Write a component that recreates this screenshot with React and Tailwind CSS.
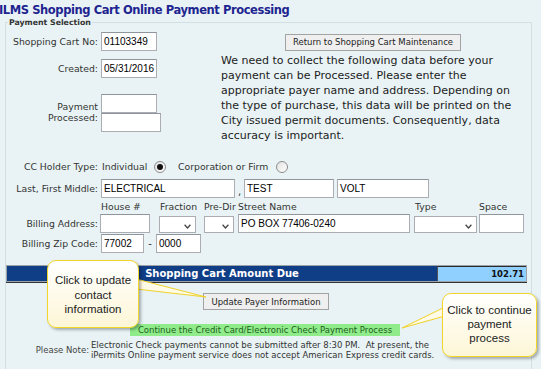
import React from "react";

const LABEL = "text-[9.3px] text-[#333] whitespace-nowrap";

function Input({ className = "", children }) {
  return (
    <div
      className={`h-[19px] shrink-0 bg-white border border-[#abadb3] border-t-[#8f959c] flex items-center pl-[2px] text-[10px] leading-none text-black font-['Liberation_Sans',sans-serif] ${className}`}
    >
      {children}
    </div>
  );
}

function Select({ className = "" }) {
  return (
    <div className={`h-[17px] shrink-0 bg-white border border-[#abadb3] flex items-end justify-end pr-[4px] pb-[3px] ${className}`}>
      <svg width="7" height="5" viewBox="0 0 7 5">
        <path d="M0.6 0.8 L3.5 4 L6.4 0.8" fill="none" stroke="#444" strokeWidth="1.3" />
      </svg>
    </div>
  );
}

function Radio({ checked }) {
  return (
    <span className="w-[12px] h-[12px] shrink-0 rounded-full border border-[#8c8c8c] bg-gradient-to-br from-[#e2e2e2] to-white flex items-center justify-center">
      {checked && <span className="w-[6px] h-[6px] rounded-full bg-[#111]" />}
    </span>
  );
}

function Label({ className = "w-[92px]", children }) {
  return <span className={`${className} shrink-0 text-right ${LABEL}`}>{children}</span>;
}

export default function App() {
  return (
    <div className="w-[541px] h-[369px] overflow-hidden relative bg-[#e9f3f5] font-['DejaVu_Sans',sans-serif]">
      <h1 className="h-[17px] -ml-[1px] pt-[3px] text-[11.5px] leading-[14px] font-bold tracking-[-0.42px] text-[#1e2590] whitespace-nowrap">
        ILMS Shopping Cart Online Payment Processing
      </h1>

      <fieldset className="ml-[5px] w-[527px] h-[360px] border border-[#d3e0e3]">
        <legend className="ml-[2px] px-[1px] text-[7.8px] leading-[11px] font-bold text-[#333]">Payment Selection</legend>

        {/* top: cart info + notice */}
        <div className="flex">
          <div className="w-[215px] shrink-0">
            <div className="mt-[4px] flex items-center">
              <Label>Shopping Cart No:</Label>
              <Input className="ml-[3px] w-[56px]">01103349</Input>
            </div>
            <div className="mt-[8px] flex items-center">
              <Label>Created:</Label>
              <Input className="ml-[3px] w-[56px]">05/31/2016</Input>
            </div>
            <div className="mt-[16px] flex">
              <Label className="w-[92px] pt-[7px] leading-[11px]">
                Payment
                <br />
                Processed:
              </Label>
              <div className="ml-[3px] flex flex-col">
                <Input className="w-[56px]" />
                <Input className="w-[60px]" />
              </div>
            </div>
          </div>

          <div className="flex-1">
            <button className="mt-[6px] ml-[64px] w-[176px] h-[17px] bg-[#efefef] border border-[#a3a3a3] text-[8.5px] text-[#222] leading-none">
              Return to Shopping Cart Maintenance
            </button>
            <p className="mt-[1px] text-[11px] leading-[15px] text-[#1c1c1c] whitespace-nowrap">
              We need to collect the following data before your
              <br />
              payment can be Processed. Please enter the
              <br />
              appropriate payer name and address. Depending on
              <br />
              the type of purchase, this data will be printed on the
              <br />
              City issued permit documents. Consequently, data
              <br />
              accuracy is important.
            </p>
          </div>
        </div>

        {/* holder type */}
        <div className="mt-[17px] h-[14px] flex items-center">
          <Label>CC Holder Type:</Label>
          <span className={`w-[56px] pl-[4px] ${LABEL}`}>Individual</span>
          <Radio checked />
          <span className={`ml-[12px] w-[98px] ${LABEL}`}>Corporation or Firm</span>
          <Radio />
        </div>

        <div className="mt-[5px] flex items-center">
          <Label>Last, First Middle:</Label>
          <Input className="ml-[3px] w-[134px]">ELECTRICAL</Input>
          <span className="w-[9px] self-end pb-[1px] text-center text-[10px] leading-none text-[#333]">,</span>
          <Input className="w-[90px]">TEST</Input>
          <Input className="ml-[3px] w-[92px]">VOLT</Input>
        </div>

        <div className={`mt-[3px] h-[12px] leading-[12px] flex pl-[94px] ${LABEL}`}>
          <span className="w-[60px] pl-[1px]">House #</span>
          <span className="w-[44px]">Fraction</span>
          <span className="w-[34px]">Pre-Dir</span>
          <span className="w-[177px]">Street Name</span>
          <span className="w-[64px]">Type</span>
          <span>Space</span>
        </div>

        <div className="mt-[1px] flex items-center">
          <Label>Billing Address:</Label>
          <Input className="ml-[2px] w-[50px]" />
          <Select className="ml-[9px] w-[37px] mt-[2px]" />
          <Select className="ml-[8px] w-[30px] mt-[2px]" />
          <Input className="ml-[4px] w-[172px]">PO BOX 77406-0240</Input>
          <Select className="ml-[4px] w-[63px] mt-[2px]" />
          <Input className="ml-[2px] w-[45px]" />
        </div>

        <div className="mt-[1px] flex items-center">
          <Label>Billing Zip Code:</Label>
          <Input className="ml-[3px] w-[43px]">77002</Input>
          <span className="w-[12px] text-center text-[10px] text-[#333]">-</span>
          <Input className="w-[45px]">0000</Input>
        </div>

        {/* amount due */}
        <div className="mt-[12px] w-[521px] h-[17px] flex border border-[#9ba3a8]">
          <div className="flex-1 bg-[#0f3d86] text-white font-bold text-[10px] leading-none flex items-center justify-center">
            Shopping Cart Amount Due
          </div>
          <div className="w-[89px] bg-[#8fd0ff] border-l border-t border-[#2a2a2a] border-l-[#555] text-right pr-[2px] font-bold text-[8.5px] leading-[14px] text-[#111]">
            102.71
          </div>
        </div>
        <div className="w-[521px] h-px bg-[#333]" />

        <button className="mt-[10px] ml-[197px] w-[126px] h-[17px] bg-[#efefef] border border-[#a3a3a3] text-[8.5px] text-[#222] leading-none block">
          Update Payer Information
        </button>

        <div className="mt-[14px] ml-[124px] w-[270px] h-[12px] bg-[#90ec8a] text-[8.5px] leading-[12px] text-[#1d5e1d] text-center whitespace-nowrap">
          Continue the Credit Card/Electronic Check Payment Process
        </div>

        <div className="mt-[4px] flex items-center">
          <span className="w-[83px] text-right text-[8.5px] text-[#444]">Please Note:</span>
          <p className="ml-[2px] text-[8.5px] leading-[10px] text-[#333] whitespace-nowrap">
            Electronic Check payments cannot be submitted after 8:30 PM.&nbsp; At present, the
            <br />
            iPermits Online payment service does not accept American Express credit cards.
          </p>
        </div>
      </fieldset>

      {/* callout pointers */}
      <svg className="absolute left-0 top-0" width="541" height="369" viewBox="0 0 541 369">
        <polygon points="136,279 206,297 136,289" fill="#fffbe6" stroke="#f0d22a" strokeWidth="1" />
        <polygon points="445,307 402,328 445,316" fill="#fffbe6" stroke="#f0d22a" strokeWidth="1" />
      </svg>

      <div className="absolute left-[47px] top-[260px] w-[92px] h-[68px] rounded-[9px] border-[1.5px] border-[#f2d52a] bg-gradient-to-b from-white to-[#fdf6d6] shadow-[2px_2px_3px_rgba(0,0,0,0.3)] pt-[12px] text-center font-['Liberation_Sans',sans-serif] text-[11.5px] leading-[14.5px] text-[#222]">
        Click to update
        <br />
        contact
        <br />
        information
      </div>

      <div className="absolute left-[442px] top-[293px] w-[95px] h-[64px] rounded-[9px] border-[1.5px] border-[#f2d52a] bg-gradient-to-b from-white to-[#fdf6d6] shadow-[2px_2px_3px_rgba(0,0,0,0.3)] pt-[9px] text-center font-['Liberation_Sans',sans-serif] text-[11.5px] leading-[14px] text-[#222]">
        Click to continue
        <br />
        payment
        <br />
        process
      </div>
    </div>
  );
}
